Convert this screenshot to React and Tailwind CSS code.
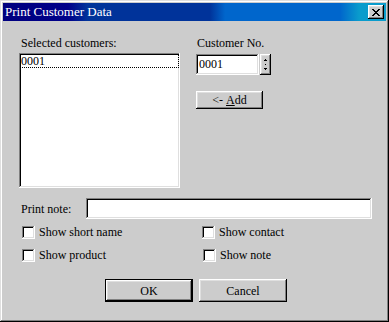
import React from "react";

const raised =
  "shadow-[inset_-1px_-1px_#000000,inset_1px_1px_#ffffff,inset_-2px_-2px_#808080,inset_2px_2px_#dfdfdf]";
const sunken =
  "shadow-[inset_-1px_-1px_#ffffff,inset_1px_1px_#808080,inset_-2px_-2px_#dfdfdf,inset_2px_2px_#000000]";

function Checkbox({ label, className = "" }) {
  return (
    <div className={"flex items-center h-[13px] " + className}>
      <div className={"w-[13px] h-[13px] bg-white shrink-0 " + sunken} />
      <span className="ml-[4px] leading-[13px] whitespace-nowrap text-[#000000]">{label}</span>
    </div>
  );
}

export default function App() {
  return (
    <div
      className={
        "w-[389px] h-[322px] bg-[#cccccc] p-[3px] flex flex-col text-[12px] text-[#000000] font-['Liberation_Serif',serif] shadow-[inset_-1px_-1px_#000000,inset_1px_1px_#dfdfdf,inset_-2px_-2px_#808080,inset_2px_2px_#ffffff]"
      }
    >
      {/* Title bar */}
      <div className="h-[18px] flex items-center justify-between pl-[2px] pr-[2px] bg-[linear-gradient(90deg,#00007f_0%,#00008a_17%,#00339a_22%,#00339a_54%,#0066cc_58%,#0066cc_88%,#0a9ccc_93%,#0a9ccc_100%)]">
        <span className="text-white text-[13px] leading-[18px] whitespace-nowrap">Print Customer Data</span>
        <div className={"w-[16px] h-[14px] bg-[#cccccc] flex items-center justify-center " + raised}>
          <svg width="8" height="7" viewBox="0 0 8 7" shapeRendering="crispEdges">
            <path d="M0 0h2v1h-2zM6 0h2v1h-2zM1 1h2v1h-2zM5 1h2v1h-2zM2 2h4v1h-4zM3 3h2v1h-2zM2 4h4v1h-4zM1 5h2v1h-2zM5 5h2v1h-2zM0 6h2v1h-2zM6 6h2v1h-2z" fill="#000" />
          </svg>
        </div>
      </div>

      {/* Body */}
      <div className="flex flex-col pl-[16px] pt-[15px]">
        <div className="flex">
          {/* Left column */}
          <div className="w-[161px] flex flex-col">
            <div className="h-[17px] pl-[2px] leading-[14px] whitespace-nowrap">Selected customers:</div>
            <div className={"h-[135px] bg-white p-[1px] " + sunken}>
              <div className="h-[14px] border border-dotted border-black leading-[12px] text-[#000000]">0001</div>
            </div>
          </div>
          {/* Right column */}
          <div className="ml-[16px] flex flex-col">
            <div className="h-[18px] pl-[1px] leading-[14px] whitespace-nowrap">Customer No.</div>
            <div className="flex">
              <div className={"w-[63px] h-[21px] bg-white pl-[3px] leading-[21px] text-[#000000] " + sunken}>0001</div>
              <div className={"ml-[1px] w-[11px] h-[21px] bg-[#cccccc] flex flex-col items-center justify-center " + raised}>
                <svg width="5" height="13" viewBox="0 0 5 13" shapeRendering="crispEdges">
                  <path d="M2 1h1v1h-1zM1 2h3v1h-3zM2 6h1v1h-1zM1 10h3v1h-3zM2 11h1v1h-1z" fill="#000" />
                </svg>
              </div>
            </div>
            <div className={"mt-[16px] w-[67px] h-[18px] bg-[#cccccc] flex items-center justify-center leading-[18px] whitespace-nowrap " + raised}>
              &lt;-&nbsp;<span className="underline underline-offset-[1px]">A</span>dd
            </div>
          </div>
        </div>

        {/* Print note */}
        <div className="flex items-center mt-[10px]">
          <span className="w-[67px] pl-[2px] whitespace-nowrap">Print note:</span>
          <div className={"w-[286px] h-[21px] bg-white " + sunken} />
        </div>

        {/* Checkboxes */}
        <div className="grid grid-cols-[180px_1fr] pl-[3px] mt-[7px] gap-y-[10px]">
          <Checkbox label="Show short name" />
          <Checkbox label="Show contact" />
          <Checkbox label="Show product" />
          <Checkbox label="Show note" className="ml-[1px]" />
        </div>

        {/* Buttons */}
        <div className="flex mt-[17px] pl-[86px] gap-[6px]">
          <div className="w-[88px] h-[23px] border border-black bg-[#cccccc]">
            <div className={"w-full h-full flex items-center justify-center " + raised}>OK</div>
          </div>
          <div className={"w-[88px] h-[23px] bg-[#cccccc] flex items-center justify-center " + raised}>Cancel</div>
        </div>
      </div>
    </div>
  );
}
